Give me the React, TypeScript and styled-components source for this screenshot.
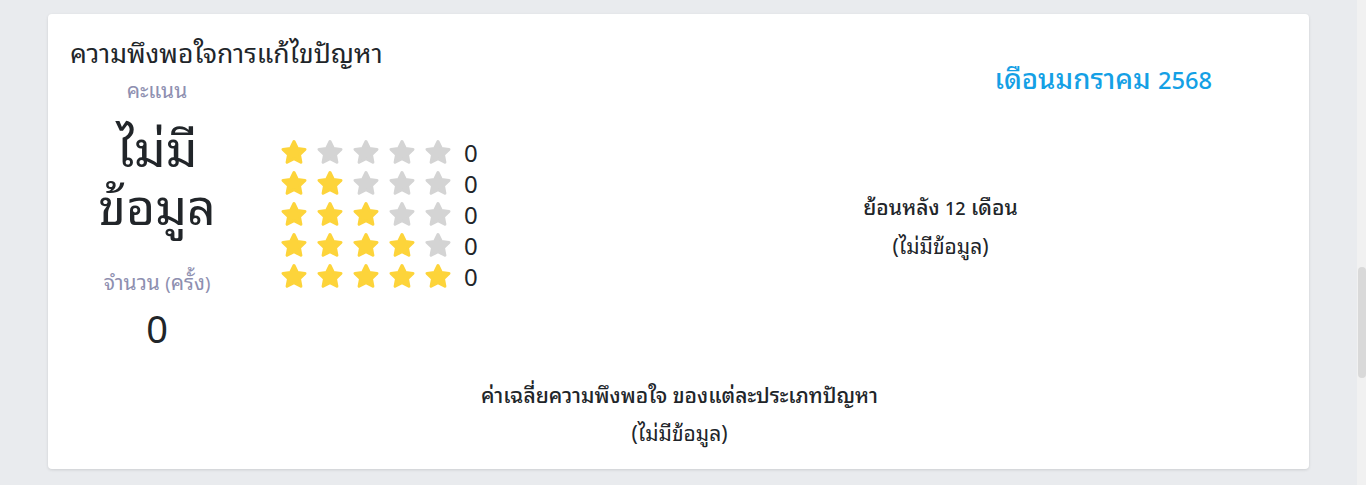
import React from "react";
import styled, { createGlobalStyle } from "styled-components";

const GlobalStyle = createGlobalStyle`
  html, body {
    margin: 0;
    padding: 0;
    height: 100%;
    overflow: hidden;
  }
  body {
    background: #e9ebee;
    font-family: "Noto Sans", "Noto Sans Thai Looped", "Noto Sans Thai", sans-serif;
    color: #212529;
  }
`;

const ROWS = [1, 2, 3, 4, 5];

const Star: React.FC<{ filled: boolean }> = ({ filled }) => {
  const c = filled ? "#fdd43a" : "#d4d4d4";
  return (
    <svg width="28" height="26" viewBox="0 0 28 26">
      <polygon
        points="14,2.5 17.4,9.4 25,10.4 19.5,15.7 20.9,23.3 14,19.6 7.1,23.3 8.5,15.7 3,10.4 10.6,9.4"
        fill={c}
        stroke={c}
        strokeWidth="3"
        strokeLinejoin="round"
      />
    </svg>
  );
};

const App: React.FC = () => {
  return (
    <>
      <GlobalStyle />
      <StyledPage>
        <StyledMain>
          <StyledCard>
            <StyledTopRow>
              <StyledLeftPane>
                <StyledTitle>ความพึงพอใจการแก้ไขปัญหา</StyledTitle>
                <StyledScoreRow>
                  <StyledScoreCol>
                    <StyledLabel>คะแนน</StyledLabel>
                    <StyledBigValue>
                      ไม่มี
                      <br />
                      ข้อมูล
                    </StyledBigValue>
                    <StyledLabel>
                      จำนวน <StyledLatin>(</StyledLatin>ครั้ง
                      <StyledLatin>)</StyledLatin>
                    </StyledLabel>
                    <StyledCount>0</StyledCount>
                  </StyledScoreCol>
                  <StyledStars>
                    {ROWS.map((n) => (
                      <StyledStarRow key={n}>
                        {ROWS.map((i) => (
                          <Star key={i} filled={i <= n} />
                        ))}
                        <StyledStarCount>0</StyledStarCount>
                      </StyledStarRow>
                    ))}
                  </StyledStars>
                </StyledScoreRow>
              </StyledLeftPane>
              <StyledRightPane>
                <StyledMonth>
                  เดือนมกราคม <StyledLatin>2568</StyledLatin>
                </StyledMonth>
                <StyledEmptyBlock>
                  <StyledEmptyTitle>
                    ย้อนหลัง <StyledLatin>12</StyledLatin> เดือน
                  </StyledEmptyTitle>
                  <StyledEmptyText>(ไม่มีข้อมูล)</StyledEmptyText>
                </StyledEmptyBlock>
              </StyledRightPane>
            </StyledTopRow>
            <StyledBottom>
              <StyledEmptyTitle>
                ค่าเฉลี่ยความพึงพอใจ ของแต่ละประเภทปัญหา
              </StyledEmptyTitle>
              <StyledEmptyText>(ไม่มีข้อมูล)</StyledEmptyText>
            </StyledBottom>
          </StyledCard>
        </StyledMain>
        <StyledScrollTrack>
          <StyledScrollThumb />
        </StyledScrollTrack>
      </StyledPage>
    </>
  );
};
export default App;

const StyledPage = styled.div`
  display: flex;
  height: 485px;
`;

const StyledMain = styled.div`
  flex: 1;
  padding: 14px 48px 0 48px;
  box-sizing: border-box;
`;

const StyledScrollTrack = styled.div`
  width: 9px;
  background: #f1f1f1;
  display: flex;
  flex-direction: column;
  align-items: flex-end;
`;

const StyledScrollThumb = styled.div`
  margin-top: 267px;
  width: 8px;
  height: 111px;
  border-radius: 4px;
  background: #d9d9d9;
`;

const StyledCard = styled.div`
  background: #fff;
  border-radius: 4px;
  box-shadow: 0 1px 3px rgba(0, 0, 0, 0.12);
  height: 455px;
  box-sizing: border-box;
  padding: 22px 20px 0 22px;
  display: flex;
  flex-direction: column;
`;

const StyledLatin = styled.span`
  font-size: 0.86em;
`;

const StyledTopRow = styled.div`
  display: flex;
`;

const StyledLeftPane = styled.div`
  width: 522px;
  display: flex;
  flex-direction: column;
`;

const StyledTitle = styled.div`
  font-size: 26.5px;
  line-height: 34px;
  height: 34px;
  white-space: nowrap;
`;

const StyledScoreRow = styled.div`
  display: flex;
`;

const StyledScoreCol = styled.div`
  width: 174px;
  margin-top: 6px;
  display: flex;
  flex-direction: column;
  align-items: center;
  text-align: center;
`;

const StyledLabel = styled.div`
  font-size: 21px;
  line-height: 28px;
  height: 28px;
  color: #8e8fb0;
  white-space: nowrap;
`;

const StyledBigValue = styled.div`
  font-size: 50px;
  line-height: 58px;
  margin: 15px 0 33px;
`;

const StyledCount = styled.div`
  font-size: 38px;
  line-height: 44px;
  margin-top: 10px;
`;

const StyledStars = styled.div`
  display: flex;
  flex-direction: column;
  margin: 69px 0 0 36px;
  gap: 5px;
`;

const StyledStarRow = styled.div`
  display: flex;
  align-items: center;
  gap: 8px;
  height: 26px;
`;

const StyledStarCount = styled.span`
  font-size: 24px;
  margin-left: 4px;
`;

const StyledRightPane = styled.div`
  flex: 1;
  display: flex;
  flex-direction: column;
`;

const StyledMonth = styled.div`
  text-align: right;
  padding-right: 77px;
  font-size: 27.5px;
  font-weight: 500;
  color: #14a0e5;
  line-height: 34px;
  margin-top: 26px;
  white-space: nowrap;
`;

const StyledEmptyBlock = styled.div`
  margin-top: 92px;
  text-align: center;
`;

const StyledEmptyTitle = styled.div`
  font-size: 21px;
  font-weight: 500;
  line-height: 37px;
  white-space: nowrap;
`;

const StyledEmptyText = styled.div`
  font-size: 21px;
  line-height: 38px;
  white-space: nowrap;
`;

const StyledBottom = styled.div`
  margin-top: 27px;
  text-align: center;
`;
